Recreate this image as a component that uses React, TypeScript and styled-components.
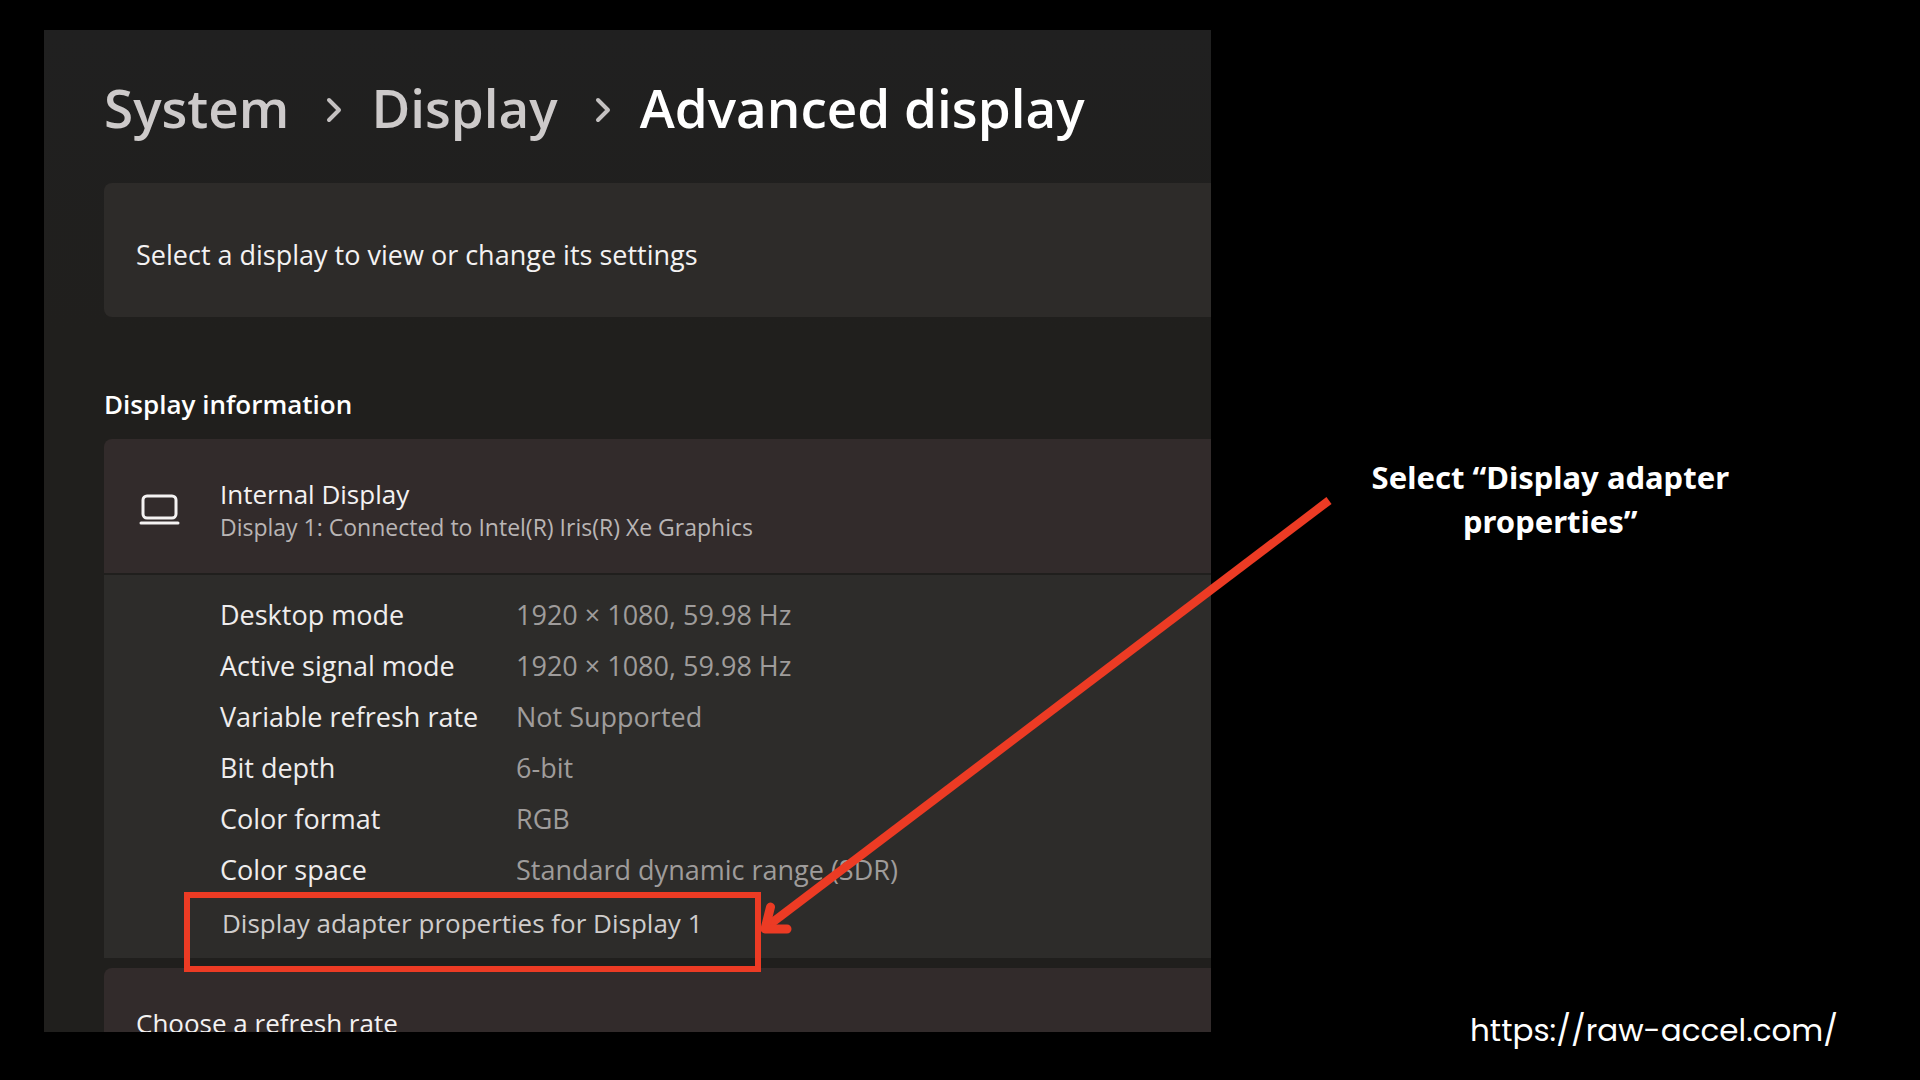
import React from "react";
import styled, { createGlobalStyle } from "styled-components";

const GlobalStyle = createGlobalStyle`
  *, *::before, *::after { box-sizing: border-box; }
  body {
    margin: 0;
    background: #000;
    color: #fff;
    font-family: "Segoe UI", "Open Sans", "Noto Sans", sans-serif;
  }
`;

const accent = "#ec3b24";

const Slide = styled.main`
  display: grid;
  grid-template-columns: minmax(0, 19fr) minmax(0, 11fr);
  min-height: 100vh;
  padding: 30px 34px 0 44px;
`;

const Panel = styled.section`
  align-self: start;
  padding-left: 60px;
  background: linear-gradient(#202020, #201f1d 30%);
`;

const Breadcrumb = styled.nav`
  display: flex;
  align-items: center;
  height: 153px;
  padding-top: 2px;
  font-size: 53px;
  font-weight: 600;
  line-height: 72px;
  white-space: nowrap;
`;

const Crumb = styled.a`
  color: #cdcaca;
  text-decoration: none;
`;

const CurrentPage = styled.h1`
  margin: 0;
  font: inherit;
  color: #fff;
`;

const ChevronIcon = styled.svg`
  flex: none;
  width: 18px;
  height: 26px;
  margin: 4px 28px 0 36px;
`;

const Card = styled.div<{ $tone?: "warm"; $clipped?: boolean }>`
  display: flex;
  align-items: center;
  height: ${(p) => (p.$clipped ? "64px" : "134px")};
  padding: 0 32px;
  border-radius: ${(p) => (p.$clipped ? "8px 0 0 0" : "8px 0 0 8px")};
  overflow: hidden;
  background: ${(p) => (p.$tone ? "#322b2b" : "#2d2b29")};
`;

const CardText = styled.p<{ $low?: boolean }>`
  margin: 0;
  padding-top: ${(p) => (p.$low ? "46px" : "10px")};
  font-size: ${(p) => (p.$low ? "26px" : "27px")};
  line-height: 38px;
  white-space: nowrap;
  color: #f4f2f2;
`;

const SectionTitle = styled.h2`
  margin: 0;
  padding: 68px 0 16px;
  font-size: 26px;
  font-weight: 600;
  line-height: 38px;
`;

const Expander = styled.button`
  display: flex;
  align-items: center;
  gap: 40px;
  width: 100%;
  height: 134px;
  padding: 8px 35px 0;
  border: 0;
  border-radius: 8px 0 0 0;
  background: #322b2b;
  color: #f4f2f2;
  font: inherit;
  text-align: left;
  white-space: nowrap;
`;

const LaptopIcon = styled.svg`
  flex: none;
  width: 41px;
  height: 32px;
`;

const Stack = styled.span`
  display: flex;
  flex-direction: column;
`;

const DeviceName = styled.span`
  font-size: 26px;
  line-height: 34px;
`;

const DeviceDetail = styled.span`
  font-size: 23px;
  line-height: 32px;
  color: #b9b5b5;
`;

const Details = styled.div`
  display: flow-root;
  margin: 2px 0 10px;
  padding-top: 14px;
  background: #2d2c2a;
`;

const Facts = styled.dl`
  display: grid;
  grid-template-columns: 296px 1fr;
  margin: 0;
  padding-left: 116px;
  font-size: 27px;
  line-height: 51px;
  white-space: nowrap;
`;

const Term = styled.dt`
  color: #efeded;
`;

const Value = styled.dd`
  margin: 0;
  color: #9f9c9b;
`;

const Highlight = styled.div`
  position: relative;
  z-index: 1;
  width: fit-content;
  margin: -3px 0 -14px 80px;
`;

const AdapterLink = styled.a`
  display: block;
  height: 80px;
  padding: 0 52px 0 32px;
  border: 6px solid ${accent};
  color: #cfcccc;
  font-size: 26px;
  line-height: 50px;
  text-decoration: none;
  white-space: nowrap;
`;

const Arrow = styled.svg`
  position: absolute;
  left: 100%;
  bottom: 32px;
  width: 576px;
  height: 448px;
  pointer-events: none;
`;

const Notes = styled.aside`
  display: flex;
  flex-direction: column;
  justify-content: space-between;
  padding: 425px 48px 20px 52px;
`;

const Callout = styled.p`
  align-self: center;
  max-width: 400px;
  margin: 0;
  font-family: "Noto Sans", "Open Sans", sans-serif;
  font-size: 31px;
  font-weight: 700;
  line-height: 44px;
  text-align: center;
`;

const SiteLink = styled.a`
  align-self: flex-end;
  color: #fff;
  font-family: Poppins, Lato, sans-serif;
  font-size: 31px;
  line-height: 60px;
  text-decoration: none;
`;

const facts = [
  ["Desktop mode", "1920 × 1080, 59.98 Hz"],
  ["Active signal mode", "1920 × 1080, 59.98 Hz"],
  ["Variable refresh rate", "Not Supported"],
  ["Bit depth", "6-bit"],
  ["Color format", "RGB"],
  ["Color space", "Standard dynamic range (SDR)"],
];

function Chevron() {
  return (
    <ChevronIcon viewBox="0 0 18 26" fill="none" stroke="#c4c1c1" strokeWidth="4" strokeLinecap="round" strokeLinejoin="round" aria-hidden="true">
      <path d="M4 3l10 10L4 23" />
    </ChevronIcon>
  );
}

export default function App() {
  return (
    <>
      <GlobalStyle />
      <Slide>
        <Panel>
          <Breadcrumb aria-label="Breadcrumb">
            <Crumb href="#system">System</Crumb>
            <Chevron />
            <Crumb href="#display">Display</Crumb>
            <Chevron />
            <CurrentPage>Advanced display</CurrentPage>
          </Breadcrumb>

          <Card>
            <CardText>Select a display to view or change its settings</CardText>
          </Card>

          <SectionTitle>Display information</SectionTitle>

          <Expander type="button" aria-expanded="true">
            <LaptopIcon viewBox="0 0 41 32" fill="none" stroke="#f4f2f2" strokeWidth="3" strokeLinecap="round" aria-hidden="true">
              <rect x="4" y="2" width="33" height="22" rx="4" />
              <path d="M2 29h37" />
            </LaptopIcon>
            <Stack>
              <DeviceName>Internal Display</DeviceName>
              <DeviceDetail>Display 1: Connected to Intel(R) Iris(R) Xe Graphics</DeviceDetail>
            </Stack>
          </Expander>

          <Details>
            <Facts>
              {facts.map(([term, value]) => (
                <React.Fragment key={term}>
                  <Term>{term}</Term>
                  <Value>{value}</Value>
                </React.Fragment>
              ))}
            </Facts>
            <Highlight>
              <AdapterLink href="#adapter">Display adapter properties for Display 1</AdapterLink>
              <Arrow viewBox="762 492 576 448" fill="none" stroke={accent} aria-hidden="true">
                <path d="M1330 500.500L766 928" strokeWidth="8.500" />
                <path d="M771.500 907L766 929H788" strokeWidth="9" strokeLinecap="round" strokeLinejoin="round" />
              </Arrow>
            </Highlight>
          </Details>

          <Card $tone="warm" $clipped>
            <CardText $low>Choose a refresh rate</CardText>
          </Card>
        </Panel>

        <Notes>
          <Callout>Select “Display adapter properties”</Callout>
          <SiteLink href="https://raw-accel.com/">https://raw-accel.com/</SiteLink>
        </Notes>
      </Slide>
    </>
  );
}
